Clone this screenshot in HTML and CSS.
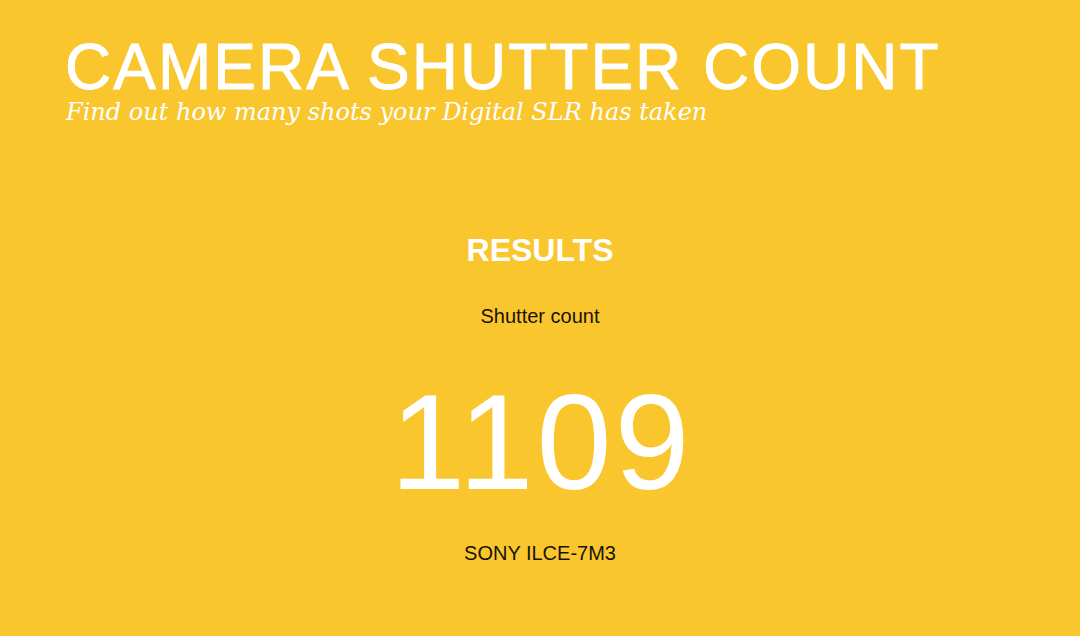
FILE: index.html
```html
<!DOCTYPE html>
<html lang="en">
<head>
<meta charset="utf-8">
<title>Camera Shutter Count</title>
<link rel="stylesheet" href="styles.css">
</head>
<body>
  <header class="masthead">
    <h1 class="title">CAMERA SHUTTER COUNT</h1>
    <p class="tagline">Find out how many shots your Digital SLR has taken</p>
  </header>
  <main class="results">
    <h2 class="results-heading">RESULTS</h2>
    <p class="label">Shutter count</p>
    <p class="count">1109</p>
    <p class="model">SONY ILCE-7M3</p>
  </main>
</body>
</html>
```
FILE: styles.css
```css
html, body {
  margin: 0;
  padding: 0;
}

body {
  background: #f9c62e;
  font-family: "Liberation Sans", Arial, sans-serif;
  color: #1a1208;
  width: 1080px;
  height: 636px;
  overflow: hidden;
}

.masthead {
  padding: 37px 0 0 65px;
}

/* medium-weight headline: regular face thickened with a thin stroke */
.title {
  margin: 0;
  font-size: 64px;
  font-weight: normal;
  line-height: 60px;
  color: #fff;
  -webkit-text-stroke: 0.9px #fff;
  letter-spacing: 2px;
}

.tagline {
  margin: 1px 0 0 1px;
  font-family: "DejaVu Serif", Georgia, serif;
  font-style: italic;
  font-size: 24px;
  line-height: 28px;
  color: #fff;
}

.results {
  display: flex;
  flex-direction: column;
  align-items: center;
  padding-top: 104px;
}

.results-heading {
  margin: 0;
  font-size: 32px;
  font-weight: bold;
  line-height: 40px;
  color: #fff;
}

.label {
  margin: 35px 0 0;
  font-size: 20px;
  line-height: 22px;
}

.count {
  margin: 41px 0 0;
  padding-left: 3px;
  font-size: 135px;
  line-height: 150px;
  letter-spacing: 3px;
  color: #fff;
}

.model {
  margin: 24px 0 0;
  font-size: 20px;
  line-height: 22px;
}
```
